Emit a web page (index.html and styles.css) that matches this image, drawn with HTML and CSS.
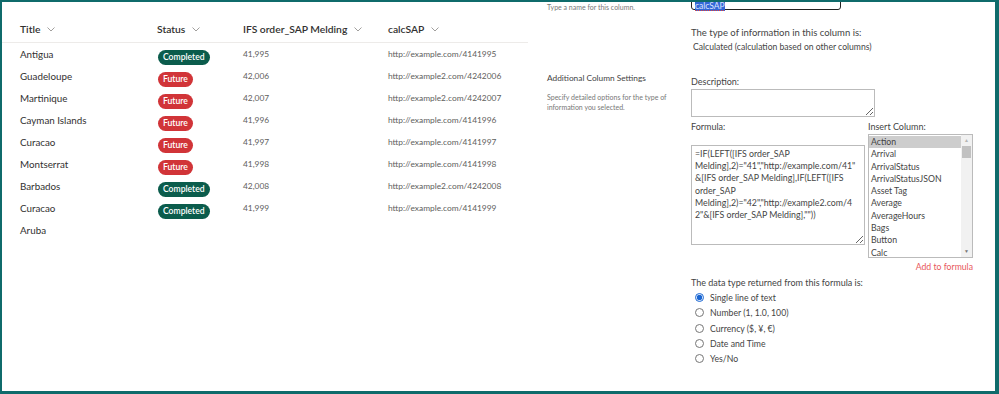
FILE: index.html
```html
<!DOCTYPE html>
<html lang="en">
<head>
    <meta charset="UTF-8">
    <title>calcSAP - Column settings</title>
    <link rel="stylesheet" href="styles.css">
</head>
<body>
    <div class="frame">
        <div class="list">
            <div class="row head">
                <div class="cell">Title <svg class="chev" viewBox="0 0 8 5"><path d="M0.5 0.5 L4 4 L7.5 0.5"/></svg></div>
                <div class="cell">Status <svg class="chev" viewBox="0 0 8 5"><path d="M0.5 0.5 L4 4 L7.5 0.5"/></svg></div>
                <div class="cell">IFS order_SAP Melding <svg class="chev" viewBox="0 0 8 5"><path d="M0.5 0.5 L4 4 L7.5 0.5"/></svg></div>
                <div class="cell">calcSAP <svg class="chev" viewBox="0 0 8 5"><path d="M0.5 0.5 L4 4 L7.5 0.5"/></svg></div>
            </div>
            <div class="row">
                <div class="cell title">Antigua</div>
                <div class="cell"><span class="badge done">Completed</span></div>
                <div class="cell num">41,995</div>
                <div class="cell url">http://example.com/4141995</div>
            </div>
            <div class="row">
                <div class="cell title">Guadeloupe</div>
                <div class="cell"><span class="badge future">Future</span></div>
                <div class="cell num">42,006</div>
                <div class="cell url">http://example2.com/4242006</div>
            </div>
            <div class="row">
                <div class="cell title">Martinique</div>
                <div class="cell"><span class="badge future">Future</span></div>
                <div class="cell num">42,007</div>
                <div class="cell url">http://example2.com/4242007</div>
            </div>
            <div class="row">
                <div class="cell title">Cayman Islands</div>
                <div class="cell"><span class="badge future">Future</span></div>
                <div class="cell num">41,996</div>
                <div class="cell url">http://example.com/4141996</div>
            </div>
            <div class="row">
                <div class="cell title">Curacao</div>
                <div class="cell"><span class="badge future">Future</span></div>
                <div class="cell num">41,997</div>
                <div class="cell url">http://example.com/4141997</div>
            </div>
            <div class="row">
                <div class="cell title">Montserrat</div>
                <div class="cell"><span class="badge future">Future</span></div>
                <div class="cell num">41,998</div>
                <div class="cell url">http://example.com/4141998</div>
            </div>
            <div class="row">
                <div class="cell title">Barbados</div>
                <div class="cell"><span class="badge done">Completed</span></div>
                <div class="cell num">42,008</div>
                <div class="cell url">http://example2.com/4242008</div>
            </div>
            <div class="row">
                <div class="cell title">Curacao</div>
                <div class="cell"><span class="badge done">Completed</span></div>
                <div class="cell num">41,999</div>
                <div class="cell url">http://example.com/4141999</div>
            </div>
            <div class="row">
                <div class="cell title">Aruba</div>
                <div class="cell"></div>
                <div class="cell num"></div>
                <div class="cell url"></div>
            </div>
        </div>

        <div class="settings">
            <div class="section name-section">
                <div class="about">
                    <p class="hint">Type a name for this column.</p>
                </div>
                <div class="fields">
                    <div class="name-input"><span class="selected">calcSAP</span></div>
                    <p class="label type-label">The type of information in this column is:</p>
                    <p class="label type-value">Calculated (calculation based on other columns)</p>
                </div>
            </div>

            <div class="section">
                <div class="about">
                    <h4>Additional Column Settings</h4>
                    <p class="hint">Specify detailed options for the type of information you selected.</p>
                </div>
                <div class="fields">
                    <p class="label">Description:</p>
                    <textarea class="desc"></textarea>

                    <div class="formula-grid">
                        <div>
                            <p class="label">Formula:</p>
                            <textarea class="formula" wrap="off">=IF(LEFT([IFS order_SAP
Melding],2)="41","http://example.com/41"
&amp;[IFS order_SAP Melding],IF(LEFT([IFS
order_SAP
Melding],2)="42","http://example2.com/4
2"&amp;[IFS order_SAP Melding],""))</textarea>
                        </div>
                        <div>
                            <p class="label">Insert Column:</p>
                            <div class="listbox">
                                <div class="options">
                                    <div class="option active">Action</div>
                                    <div class="option">Arrival</div>
                                    <div class="option">ArrivalStatus</div>
                                    <div class="option">ArrivalStatusJSON</div>
                                    <div class="option">Asset Tag</div>
                                    <div class="option">Average</div>
                                    <div class="option">AverageHours</div>
                                    <div class="option">Bags</div>
                                    <div class="option">Button</div>
                                    <div class="option">Calc</div>
                                </div>
                                <div class="scrollbar">
                                    <span class="arrow">&#9650;</span>
                                    <span class="thumb"></span>
                                    <span class="track"></span>
                                    <span class="arrow">&#9660;</span>
                                </div>
                            </div>
                            <a class="add-link" href="#">Add to formula</a>
                        </div>
                    </div>

                    <p class="label">The data type returned from this formula is:</p>
                    <label class="radio"><input type="radio" name="rtype" checked> Single line of text</label>
                    <label class="radio"><input type="radio" name="rtype"> Number (1, 1.0, 100)</label>
                    <label class="radio"><input type="radio" name="rtype"> Currency ($, ¥, €)</label>
                    <label class="radio"><input type="radio" name="rtype"> Date and Time</label>
                    <label class="radio"><input type="radio" name="rtype"> Yes/No</label>
                </div>
            </div>
        </div>
    </div>
</body>
</html>
```

FILE: styles.css
```css
* {
    box-sizing: border-box;
}

body {
    margin: 0;
    font-family: Lato, sans-serif;
    font-variant-numeric: tabular-nums;
    color: #323130;
    background: #fff;
}

p, h4 {
    margin: 0;
}

.frame {
    width: 999px;
    height: 394px;
    border-style: solid;
    border-color: #0f6b6b;
    border-width: 2px 4px 3px 2px;
    display: flex;
    overflow: hidden;
}

/* list view */

.list {
    width: 526px;
    flex-shrink: 0;
}

.row {
    display: grid;
    grid-template-columns: 137px 86px 145px 1fr;
    padding-left: 18px;
    height: 22px;
    align-items: center;
}

.row.head {
    height: 41px;
    padding-top: 19px;
    padding-bottom: 5px;
    align-items: start;
    border-bottom: 1px solid #edebe9;
    font-size: 10.3px;
    font-weight: 600;
    line-height: 16px;
}

.chev {
    width: 8px;
    height: 5px;
    margin-left: 4px;
    vertical-align: 1px;
    fill: none;
    stroke: #a19f9d;
    stroke-width: 1;
}

.cell.title {
    font-size: 9.8px;
}

.cell.num,
.cell.url {
    color: #605e5c;
}

.cell.num {
    font-size: 8.4px;
}

.cell.url {
    font-size: 8.4px;
}

.badge {
    display: inline-block;
    height: 15px;
    line-height: 15px;
    padding: 0 5px;
    margin-left: 1px;
    border-radius: 8px;
    color: #fff;
    font-size: 8.6px;
    font-weight: 600;
}

.badge.done { background: #0b5c4c; }
.badge.future { background: #d13438; }

/* column settings */

.settings {
    flex: 1;
    padding-left: 19px;
    font-size: 9px;
    color: #444;
}

.section {
    display: grid;
    grid-template-columns: 144px 1fr;
}

.name-section {
    margin-top: -12px;
}

.name-section .hint {
    padding-top: 12px;
}

.hint {
    font-size: 7px;
    line-height: 10px;
    color: #777;
    padding-right: 14px;
}

.about h4 {
    font-size: 8.3px;
    font-weight: normal;
    line-height: 14px;
    color: #444;
    padding-top: 16px;
    margin-bottom: 7px;
}

.label {
    line-height: 15px;
}

.name-input {
    width: 150px;
    height: 20px;
    border: 1px solid #222;
    border-radius: 3px;
    padding: 11px 0 0 3px;
    font-size: 8.5px;
    line-height: 8px;
}

.selected {
    background: #3367d6;
    color: #dfe6ff;
    text-decoration: underline dotted #e04040;
}

.type-label {
    margin-top: 15px;
    font-size: 9.5px;
}

.type-value {
    padding-left: 2px;
    font-size: 8.6px;
}

.section + .section .fields {
    padding-top: 19px;
}

.desc {
    display: block;
    width: 184px;
    height: 28px;
    border: 1px solid #bbb;
    resize: vertical;
    margin-bottom: 2px;
}

.formula-grid {
    display: grid;
    grid-template-columns: 174px 105px;
    gap: 3px;
}

.formula {
    display: block;
    width: 174px;
    height: 100px;
    margin-top: 11px;
    border: 1px solid #bbb;
    padding: 2px 3px;
    font-family: inherit;
    font-size: 8.8px;
    line-height: 12.2px;
    color: #444;
    white-space: pre;
    overflow: hidden;
}

.listbox {
    display: flex;
    height: 124px;
    border: 1px solid #bbb;
}

.options {
    flex: 1;
    padding-top: 1px;
}

.option {
    height: 12.3px;
    line-height: 12.3px;
    padding-left: 2px;
    font-size: 8.7px;
    color: #444;
}

.option.active {
    background: #cdcdcd;
}

.scrollbar {
    width: 11px;
    display: flex;
    flex-direction: column;
    background: #f1f1f1;
}

.arrow {
    height: 11px;
    font-size: 5px;
    line-height: 11px;
    text-align: center;
    color: #777;
}

.arrow:first-child {
    color: #b5b5b5;
}

.thumb {
    height: 12px;
    margin: 0 1px;
    background: #c1c1c1;
}

.track {
    flex: 1;
}

.add-link {
    display: block;
    text-align: right;
    line-height: 15px;
    margin-top: 1px;
    margin-bottom: 1px;
    font-size: 8.7px;
    color: #e8585c;
    text-decoration: none;
}

.radio {
    display: flex;
    align-items: center;
    height: 15.25px;
    padding-left: 4px;
    font-size: 8.7px;
}

.radio input {
    width: 9px;
    height: 9px;
    margin: 0 6px 0 0;
    accent-color: #1a66d2;
}
```
